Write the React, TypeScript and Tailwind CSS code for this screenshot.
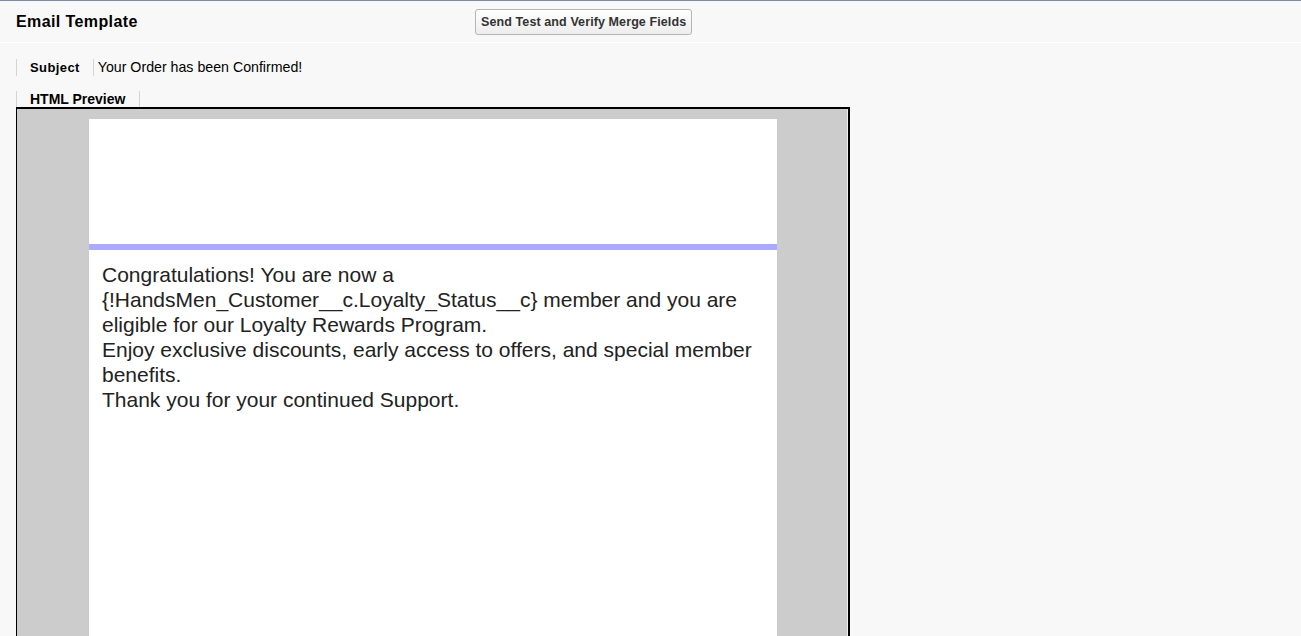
import React from "react";

export default function App() {
  return (
    <div
      className="min-h-[636px] h-[636px] overflow-hidden bg-[#f8f8f8] border-t border-[#7d8ba6] text-[#000]"
      style={{ fontFamily: '"Liberation Sans", Arial, sans-serif' }}
    >
      {/* Header */}
      <div className="flex items-center h-[42px] px-4 border-b border-white">
        <div className="w-[459px] text-[16px] tracking-[0.4px] font-bold text-black pt-[1px]">Email Template</div>
        <button className="h-[26px] mt-[1px] px-[5px] pt-[1px] rounded-[3px] border border-[#b5b5b5] bg-gradient-to-b from-white to-[#ededed] text-[12.5px] tracking-[0.1px] font-bold text-[#333] leading-none">
          Send Test and Verify Merge Fields
        </button>
      </div>

      {/* Subject row */}
      <div className="pt-[16px] pl-4">
        <div className="flex items-center h-[17px]">
          <div className="h-full border-l border-[#d4d4d4] pl-[13px] pr-[13px] font-bold flex items-center text-[13px] tracking-[0.4px] text-[#000]">
            Subject
          </div>
          <div className="h-full border-l border-[#d4d4d4] pl-[4px] flex items-center text-[14.2px] text-[#000]">
            Your Order has been Confirmed!
          </div>
        </div>
      </div>

      {/* HTML Preview tab */}
      <div className="pt-[15px] pl-4">
        <div className="flex h-[16px]">
          <div className="border-l border-r border-[#d4d4d4] pl-[13px] w-[124px] font-bold flex items-end leading-none pb-[1px] text-[14px] text-[#000]">
            HTML Preview
          </div>
        </div>
      </div>

      {/* Preview frame */}
      <div className="pl-4">
        <div className="w-[834px] border-t-2 border-l border-r-2 border-black">
          <div className="bg-[#cccccc] border-r border-[#eeeeee] pt-[10px] h-[600px]">
            <div className="ml-[72px] w-[688px] bg-white h-[700px]">
              <div className="h-[125px]" />
              <div className="h-[6px] bg-[#aaaaff]" />
              <div className="px-[13px] pt-[12px] text-[21px] leading-[25px] text-[#222]">
                Congratulations! You are now a {"{!HandsMen_Customer__c.Loyalty_Status__c}"} member and you are eligible for our Loyalty Rewards Program.
                <br />
                Enjoy exclusive discounts, early access to offers, and special member benefits.
                <br />
                Thank you for your continued Support.
              </div>
            </div>
          </div>
        </div>
      </div>
    </div>
  );
}
